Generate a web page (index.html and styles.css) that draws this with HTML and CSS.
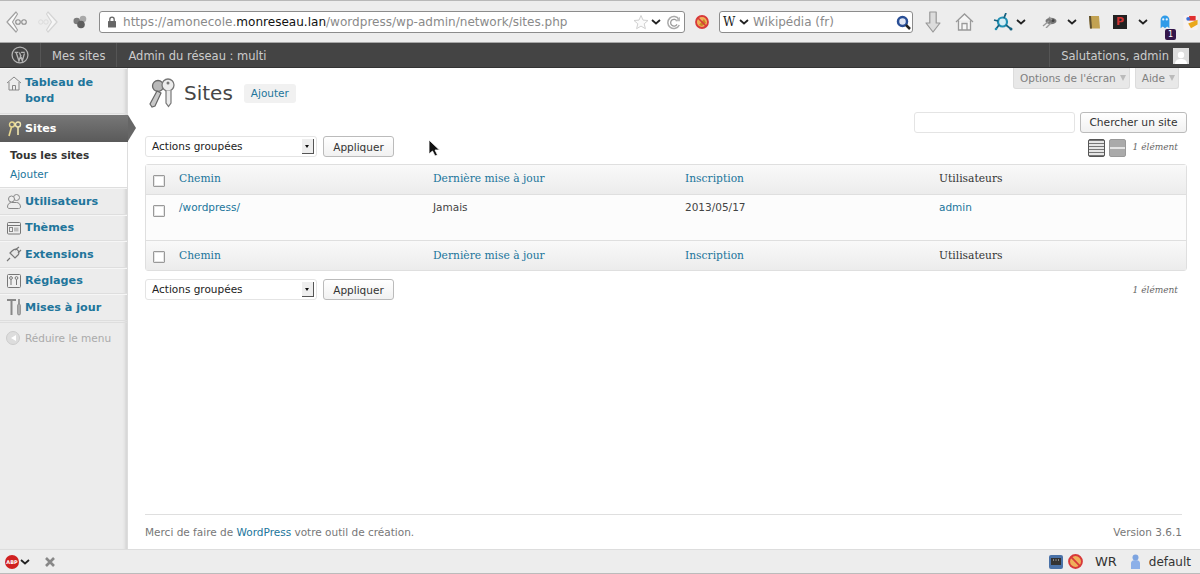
FILE: index.html
```html
<!DOCTYPE html>
<html lang="fr">
<head>
<meta charset="utf-8">
<title>Sites</title>
<link rel="stylesheet" href="styles.css">
</head>
<body>
<div class="page">
  <header class="chrome">
    <svg class="ic back" width="22" height="24" viewBox="0 0 22 24"><path d="M10 2 1 12l9 10 1.500-2-5-8 5-8z" fill="#fbfbfb" stroke="#a0a0a0" stroke-width="1.200" stroke-linejoin="round"/><circle cx="12" cy="12" r="2.300" fill="none" stroke="#8e8e8e" stroke-width="1.100"/><circle cx="18" cy="12" r="2.300" fill="none" stroke="#8e8e8e" stroke-width="1.100"/></svg>
    <svg class="ic fwd" width="20" height="24" viewBox="0 0 20 24"><path d="M10 2l9 10-9 10-1.500-2 5-8-5-8z" fill="#f6f6f6" stroke="#d4d4d4" stroke-width="1.200" stroke-linejoin="round"/><circle cx="2.800" cy="12" r="2.200" fill="none" stroke="#dcdcdc"/><circle cx="8" cy="12" r="2.200" fill="none" stroke="#dcdcdc"/></svg>
    <svg class="ic tabs" width="14" height="14" viewBox="0 0 14 14"><circle cx="3.800" cy="6" r="3.300" fill="#7c7c7c"/><circle cx="10" cy="4" r="3.300" fill="#a8a8a8"/><circle cx="8" cy="9.500" r="3.800" fill="#5e5e5e"/></svg>
    <div class="urlbar">
      <svg width="10" height="12" viewBox="0 0 10 12"><rect x="1" y="5" width="8" height="6.500" rx=".5" fill="#666"/><path d="M2.800 5V3.400a2.200 2.200 0 0 1 4.400 0V5" fill="none" stroke="#666" stroke-width="1.300"/></svg>
      <span class="url">https://amonecole.<b>monreseau.lan</b>/wordpress/wp-admin/network/sites.php</span>
      <svg class="star" width="16" height="16" viewBox="0 0 16 16"><path d="M8 1.500l2 4.600 5 .4-3.800 3.300 1.200 4.900L8 12.100l-4.400 2.600 1.200-4.900L1 6.500l5-.4z" fill="#fbfbfb" stroke="#d0d0d0"/></svg>
      <svg class="chev" width="10" height="6" viewBox="0 0 10 6"><path d="M1 1l4 3.500L9 1" fill="none" stroke="#222" stroke-width="1.800"/></svg>
      <svg class="reload" width="15" height="15" viewBox="0 0 15 15"><path d="M13 4.500A6 6 0 1 0 13.300 10" fill="none" stroke="#aaa" stroke-width="1.500"/><path d="M11 6a3.400 3.400 0 1 0 0 3.400" fill="none" stroke="#999" stroke-width="1.300"/><path d="M9.500 6.300H14V1.800z" fill="#bbb"/></svg>
    </div>
    <svg class="ic noscript" width="14" height="14" viewBox="0 0 14 14"><circle cx="7" cy="7" r="6" fill="#efb05a" stroke="#d8393a" stroke-width="1.800"/><path d="M4 10l5-6 2 4-4 3z" fill="#c98422"/><path d="M3 3l8 8" stroke="#d8393a" stroke-width="1.600"/></svg>
    <div class="searchbar">
      <span class="wlogo">W</span>
      <svg class="chev" width="10" height="6" viewBox="0 0 10 6"><path d="M1 1l4 3.500L9 1" fill="none" stroke="#222" stroke-width="1.800"/></svg>
      <span class="wiki">Wikipédia (fr)</span>
      <svg class="loupe" width="15" height="15" viewBox="0 0 15 15"><circle cx="6.500" cy="6.500" r="4.500" fill="#dfe6f5" stroke="#2a4f96" stroke-width="2.500"/><path d="M10 10l4 4" stroke="#222" stroke-width="2.500"/></svg>
    </div>
    <svg class="ic dl" width="16" height="22" viewBox="0 0 16 22"><path d="M4.800 1h6.400v11H15l-7 9-7-9h3.800z" fill="#dcdcdc" stroke="#989898" stroke-width="1.200" stroke-linejoin="round"/></svg>
    <svg class="ic home" width="19" height="20" viewBox="0 0 19 20"><path d="M1 10l8.500-8L18 10M3.500 8.500V18h12V8.500" fill="#f6f6f6" stroke="#999" stroke-width="1.300"/><path d="M7 18v-6.500h5V18" fill="none" stroke="#999" stroke-width="1.300"/></svg>
    <svg class="ic net" width="20" height="18" viewBox="0 0 20 18"><circle cx="9.500" cy="9" r="4.500" fill="#d6eef6" stroke="#1f90b4" stroke-width="2.200"/><path d="M1 7l4 1M13 0l-2 5M13 12l5 4M6 12l-3 4" stroke="#16617f" stroke-width="1.800"/><circle cx="18" cy="16" r="1.500" fill="#16617f"/><circle cx="3" cy="16" r="1.300" fill="#1f90b4"/></svg>
    <svg class="chev c1" width="10" height="6" viewBox="0 0 10 6"><path d="M1 1l4 3.500L9 1" fill="none" stroke="#222" stroke-width="1.800"/></svg>
    <svg class="ic fly" width="15" height="12" viewBox="0 0 15 12"><ellipse cx="9" cy="5" rx="5.500" ry="3.300" fill="#777"/><circle cx="11" cy="4.500" r="1.500" fill="#444"/><path d="M1 10l6-5M4 12l5-5M7 1l3 3" stroke="#999" stroke-width="1.400"/></svg>
    <svg class="chev c2" width="10" height="6" viewBox="0 0 10 6"><path d="M1 1l4 3.500L9 1" fill="none" stroke="#222" stroke-width="1.800"/></svg>
    <svg class="ic note" width="12" height="13" viewBox="0 0 12 13"><path d="M1 0h10l1 12.500H2z" fill="#c2a252"/><path d="M1 0h2l1 12.500H2z" fill="#5e5030"/></svg>
    <span class="pocket">P</span>
    <svg class="chev c3" width="10" height="6" viewBox="0 0 10 6"><path d="M1 1l4 3.500L9 1" fill="none" stroke="#222" stroke-width="1.800"/></svg>
    <span class="ghost">
      <svg width="12" height="14" viewBox="0 0 12 16"><path d="M1 15V5.500a5 5 0 0 1 10 0V15l-2.500-2L6 15l-2.500-2z" fill="#2f9be8"/><circle cx="4" cy="5" r="1.300" fill="#e8f4ff"/><circle cx="8" cy="5" r="1.300" fill="#e8f4ff"/></svg>
      <span class="badge">1</span>
    </span>
    <svg class="ic last" width="15" height="15" viewBox="0 0 15 16"><rect x="0" y="0" width="15" height="16" rx="2" fill="#f7f2f2"/><path d="M5 9l10-4v5l-7 4z" fill="#eaa81c"/><path d="M6 1h7v5H6z" fill="#e03030"/><circle cx="5" cy="4" r="2" fill="#3a6fd8"/></svg>
  </header>

  <nav class="adminbar">
    <span class="ab-item ab-wp">
      <svg width="18" height="18" viewBox="0 0 17 17"><circle cx="8.500" cy="8.500" r="7.500" fill="none" stroke="#b4b4b4" stroke-width="1.200"/><path d="M3.500 6h3.500M9.500 6H13M4.800 6l2.700 8 2-5.500M8 6l2.700 8 2-7" fill="none" stroke="#b4b4b4" stroke-width="1.300"/></svg>
    </span>
    <span class="ab-item">Mes sites</span>
    <span class="ab-item ab-net">Admin du réseau : multi</span>
    <span class="ab-item ab-user">Salutations, admin <span class="avatar"><svg width="14" height="14" viewBox="0 0 14 14"><circle cx="7" cy="5" r="3.200" fill="#fff"/><path d="M1 14c0-4 3-5 6-5s6 1 6 5z" fill="#fff"/></svg></span></span>
  </nav>

  <div class="main">
    <aside class="sidebar">
      <a class="menu-item two-lines">
        <svg width="16" height="16" viewBox="0 0 16 16"><path d="M1 8l7-6 7 6M3 7v8h10V7" fill="#eee" stroke="#888"/><path d="M6.500 15v-4.500h3V15" fill="none" stroke="#888"/></svg>
        <span>Tableau de bord</span>
      </a>
      <div class="menu-current">
        <svg width="16" height="16" viewBox="0 0 16 16"><circle cx="6" cy="3.500" r="2.500" fill="none" stroke="#e8d890" stroke-width="1.400"/><path d="M5.500 6L3 15" stroke="#e8d890" stroke-width="1.600"/><circle cx="12" cy="3.500" r="2.500" fill="none" stroke="#f0e6b0" stroke-width="1.400"/><path d="M12 6v8" stroke="#f0e6b0" stroke-width="1.600"/></svg>
        <span>Sites</span>
      </div>
      <div class="submenu">
        <a class="sub-on">Tous les sites</a>
        <a class="sub-link">Ajouter</a>
      </div>
      <a class="menu-item">
        <svg width="16" height="16" viewBox="0 0 16 16"><circle cx="10.500" cy="4.500" r="3" fill="#eee" stroke="#888"/><circle cx="5.500" cy="6" r="3" fill="#eee" stroke="#888"/><path d="M1.500 14c0-3 2-4.500 4-4.500h5c2 0 4 1.500 4 4.500 0 1-1 1.500-2 1.500H4c-1.500 0-2.500-.5-2.500-1.500z" fill="#eee" stroke="#888"/></svg>
        <span>Utilisateurs</span>
      </a>
      <a class="menu-item">
        <svg width="16" height="16" viewBox="0 0 16 16"><rect x="1.500" y="2.500" width="13" height="11.500" rx="1" fill="#eee" stroke="#777"/><path d="M1.500 5.500h13" stroke="#777"/><rect x="3.500" y="7.500" width="3" height="4" fill="none" stroke="#888"/><rect x="8" y="7.500" width="4.500" height="4" fill="#bbb"/></svg>
        <span>Thèmes</span>
      </a>
      <a class="menu-item">
        <svg width="16" height="16" viewBox="0 0 16 16"><path d="M1 15l3-3M4 7l5 5 3-3c1.500-1.500 1-4-1-5.500C9.500 2.500 7.500 3.500 6 5zM9 4l4-3M12 7l3-3" fill="#e8e8e8" stroke="#777" stroke-width="1.200"/></svg>
        <span>Extensions</span>
      </a>
      <a class="menu-item">
        <svg width="16" height="16" viewBox="0 0 16 16"><rect x="1.500" y="1.500" width="13" height="13" rx="1" fill="#f0f0f0" stroke="#777"/><circle cx="5" cy="5" r="1.400" fill="none" stroke="#777"/><path d="M5 6.500V12" stroke="#777"/><circle cx="10.500" cy="5" r="1.400" fill="none" stroke="#777"/><path d="M10.500 6.500V12" stroke="#777"/></svg>
        <span>Réglages</span>
      </a>
      <a class="menu-item">
        <svg width="16" height="18" viewBox="0 0 16 18"><path d="M1 2h9M5.500 2v15" fill="none" stroke="#888" stroke-width="2"/><path d="M13 1v5" stroke="#777" stroke-width="1.400"/><rect x="11.500" y="6" width="3" height="11" rx="1.500" fill="#aaa" stroke="#777" stroke-width=".6"/></svg>
        <span>Mises à jour</span>
      </a>
      <div class="collapse">
        <span class="collapse-btn"><i></i></span>
        <span>Réduire le menu</span>
      </div>
    </aside>

    <main class="content">
      <div class="screen-tabs">
        <span class="tab">Options de l'écran <i></i></span>
        <span class="tab">Aide <i></i></span>
      </div>
      <div class="title-row">
        <svg width="30" height="30" viewBox="0 0 30 30"><circle cx="11" cy="8" r="5.500" fill="#b8b8b8" stroke="#666" stroke-width="1.300"/><path d="M10 13L3 26l2 3 3-1 6-13z" fill="#c8c8c8" stroke="#666" stroke-width="1.200"/><circle cx="21" cy="7" r="6" fill="#ececec" stroke="#777" stroke-width="1.300"/><circle cx="21" cy="5" r="1.500" fill="#777"/><path d="M19 12.500V25l2.500 3.500L24 25V12.500" fill="#ececec" stroke="#777" stroke-width="1.200"/></svg>
        <h1>Sites</h1>
        <a class="add-new">Ajouter</a>
      </div>
      <div class="search-row">
        <span class="input"></span>
        <span class="btn search-btn">Chercher un site</span>
      </div>
      <div class="nav top-nav">
        <div class="select"><span>Actions groupées</span><i class="arrow"></i></div>
        <span class="btn">Appliquer</span>
        <span class="view view-list"></span>
        <span class="view view-excerpt"></span>
        <em class="count">1 élément</em>
      </div>
      <table class="sites">
        <thead>
          <tr>
            <th class="cb"><span class="check"></span></th>
            <th class="c1"><a>Chemin</a></th>
            <th class="c2"><a>Dernière mise à jour</a></th>
            <th class="c3"><a>Inscription</a></th>
            <th>Utilisateurs</th>
          </tr>
        </thead>
        <tbody>
          <tr>
            <td class="cb"><span class="check"></span></td>
            <td><a>/wordpress/</a></td>
            <td>Jamais</td>
            <td>2013/05/17</td>
            <td><a>admin</a></td>
          </tr>
        </tbody>
        <tfoot>
          <tr>
            <th class="cb"><span class="check"></span></th>
            <th><a>Chemin</a></th>
            <th><a>Dernière mise à jour</a></th>
            <th><a>Inscription</a></th>
            <th>Utilisateurs</th>
          </tr>
        </tfoot>
      </table>
      <div class="nav bottom-nav">
        <div class="select"><span>Actions groupées</span><i class="arrow"></i></div>
        <span class="btn">Appliquer</span>
        <em class="count">1 élément</em>
      </div>
      <footer class="foot">
        <span>Merci de faire de <a>WordPress</a> votre outil de création.</span>
        <span>Version 3.6.1</span>
      </footer>
      <svg class="cursor" width="12" height="18" viewBox="0 0 12 18"><path d="M1 1v14l3.500-3 2.500 5 2.500-1-2.500-5h4.500z" fill="#111" stroke="#fff" stroke-width=".8"/></svg>
    </main>
  </div>

  <footer class="statusbar">
    <span class="abp">ABP</span>
    <svg class="chev" width="10" height="6" viewBox="0 0 10 6"><path d="M1 1l4 3.500L9 1" fill="none" stroke="#222" stroke-width="1.800"/></svg>
    <svg class="close" width="10" height="10" viewBox="0 0 10 10"><path d="M1 1l8 8M9 1l-8 8" stroke="#888" stroke-width="2.600"/></svg>
    <svg class="irc" width="14" height="14" viewBox="0 0 14 14"><rect width="14" height="14" rx="2" fill="#4a72a8"/><rect x="2" y="3" width="10" height="7" fill="#333"/><path d="M4 5h1M6.500 5h1M9 5h1" stroke="#ddd"/></svg>
    <svg class="ns" width="15" height="15" viewBox="0 0 14 14"><circle cx="7" cy="7" r="6" fill="#efb05a" stroke="#d8393a" stroke-width="1.800"/><path d="M3 3l8 8" stroke="#d8393a" stroke-width="1.600"/></svg>
    <span class="wr">WR</span>
    <svg class="person" width="11" height="16" viewBox="0 0 11 16"><circle cx="5.500" cy="3.500" r="3" fill="#7da4e0"/><path d="M1 15V9c0-2 2-3 4.500-3S10 7 10 9v6z" fill="#8db0e8"/></svg>
    <span class="profile">default</span>
  </footer>
</div>
</body>
</html>
```
FILE: styles.css
```css
* { box-sizing: border-box; }
html, body { margin: 0; height: 100%; overflow: hidden; }
body { font-family: "DejaVu Sans", sans-serif; font-size: 10.500px; color: #333; background: #fff; }
a { color: #21759b; text-decoration: none; }
svg { display: block; flex: none; }

.page { display: flex; flex-direction: column; height: 574px; }

.chrome { height: 43px; flex: none; display: flex; align-items: center; background: #ededed; border-top: 1px solid #b8b8b8; border-bottom: 1px solid #a8a8a8; padding: 1px 0 0 6px; }
.back { margin-right: 10px; }
.fwd { margin-right: 15px; }
.tabs { margin-right: 12px; }
.urlbar { width: 586px; height: 22px; background: #fff; border: 1px solid #8c8c8c; border-radius: 3px; display: flex; align-items: center; padding: 0 3px 0 7px; margin-right: 10px; }
.url { font-size: 12.050px; color: #8a8a8a; margin-left: 6px; flex: 1; white-space: nowrap; }
.url b { font-weight: 400; color: #111; }
.star { margin-right: 2px; }
.urlbar .chev { margin-right: 5px; }
.noscript { margin-right: 10px; }
.searchbar { width: 194px; height: 22px; background: #fff; border: 1px solid #8c8c8c; border-radius: 3px; display: flex; align-items: center; padding: 0 1px 0 3px; margin-right: 12px; }
.wlogo { font-family: "DejaVu Serif", serif; font-size: 12px; color: #222; width: 14px; margin-right: 2px; }
.wiki { font-size: 12px; color: #8a8a8a; margin-left: 4px; flex: 1; white-space: nowrap; }
.dl { margin-right: 14px; }
.home { margin-right: 19px; }
.net { margin-right: 3px; }
.c1 { margin-right: 16px; }
.fly { margin-right: 10px; }
.c2 { margin-right: 11px; }
.note { margin-right: 13px; }
.pocket { width: 14px; height: 14px; background: #222; color: #c33; font-size: 11px; font-weight: 700; text-align: center; line-height: 14px; margin-right: 11px; }
.c3 { margin-right: 11px; }
.ghost { position: relative; display: block; margin-right: 12px; }
.badge { position: absolute; left: 6px; top: 14px; width: 11px; height: 11px; background: #33164a; color: #fff; font-size: 8px; line-height: 11px; text-align: center; border-radius: 2px; }

.adminbar { height: 25px; flex: none; display: flex; align-items: center; background: #444; color: #ccc; font-size: 11.500px; border-bottom: 1px solid #333; }
.ab-item { height: 24px; display: flex; align-items: center; padding: 1px 11px 0; border-right: 1px solid #555; white-space: nowrap; }
.ab-wp { width: 41px; justify-content: center; padding: 0; border-right: 1px solid #555; }
.ab-net { border-right: 0; }
.ab-user { margin-left: auto; border-right: 0; border-left: 1px solid #555; gap: 4px; }
.avatar { width: 16px; height: 16px; background: #ddd; display: flex; align-items: flex-end; justify-content: center; }

.main { flex: 1; display: flex; min-height: 0; }

.sidebar { width: 128px; flex: none; background: #ececec; box-shadow: inset -4px 0 3px -2px #d4d4d4; border-right: 1px solid #ddd; }
.menu-item { display: flex; align-items: center; gap: 3px; height: 26.500px; padding-left: 6px; font-weight: 700; font-size: 11.200px; color: #21759b; border-top: 1px solid #f6f6f6; border-bottom: 1px solid #dedede; white-space: nowrap; }
.two-lines { height: 46px; align-items: flex-start; padding-top: 6px; line-height: 16px; white-space: normal; }
.two-lines span { width: 80px; }
.menu-current { position: relative; height: 27px; margin-top: 1px; width: 128px; display: flex; align-items: center; gap: 3px; padding-left: 6px; background: linear-gradient(#777, #5a5a5a); color: #fff; font-weight: 700; font-size: 11.200px; }
.menu-current::after { content: ""; position: absolute; left: 128px; top: 0; border-left: 8px solid #666; border-top: 13.500px solid transparent; border-bottom: 13.500px solid transparent; }
.submenu { background: #fff; padding: 5px 0 5px 10px; display: flex; flex-direction: column; gap: 3px; line-height: 16px; border-bottom: 1px solid #dedede; }
.sub-on { font-weight: 700; color: #333; }
.sub-link { color: #21759b; }
.collapse { display: flex; align-items: center; gap: 5px; padding: 8px 0 0 6px; color: #aaa; border-top: 1px solid #dedede; margin-top: 1px; }
.collapse-btn { width: 14px; height: 14px; border-radius: 50%; background: #ddd; border: 1px solid #ccc; display: flex; align-items: center; justify-content: center; }
.collapse-btn i { border-right: 5px solid #fff; border-top: 3.500px solid transparent; border-bottom: 3.500px solid transparent; }

.content { position: relative; flex: 1; padding: 0 13px 0 17px; display: flex; flex-direction: column; min-width: 0; }
.screen-tabs { position: absolute; top: 0; right: 21px; display: flex; gap: 5px; }
.tab { height: 21px; padding: 0 3px 0 6px; background: #e8e8e8; border: 1px solid #dcdcdc; border-top: 0; border-radius: 0 0 3px 3px; color: #808080; font-size: 10.500px; display: flex; align-items: center; gap: 4px; }
.tab i { border-top: 6px solid #bbb; border-left: 3.500px solid transparent; border-right: 3.500px solid transparent; }

.title-row { display: flex; align-items: center; height: 39px; margin-top: 5px; flex: none; padding-left: 2px; }
.title-row h1 { margin: 0 11px 0 7px; font-weight: 400; font-size: 20px; color: #464646; }
.add-new { background: #f1f1f1; padding: 2px 7px; margin-top: 2px; border-radius: 3px; font-size: 10.500px; line-height: 15px; }

.search-row { display: flex; justify-content: flex-end; gap: 5px; height: 21px; margin-bottom: 3px; flex: none; }
.input { width: 161px; height: 21px; background: #fff; border: 1px solid #e4e4e4; border-radius: 3px; }
.btn { height: 21px; width: 71px; justify-content: center; display: inline-flex; align-items: center; background: linear-gradient(#fff, #f1f1f1); border: 1px solid #bbb; border-radius: 3px; color: #333; font-size: 10.500px; white-space: nowrap; }
.search-btn { width: 107px; font-size: 10.700px; }

.nav { display: flex; align-items: center; height: 21px; flex: none; }
.top-nav { margin-bottom: 7px; }
.select { width: 172px; height: 21px; background: #fff; border: 1px solid #e4e4e4; border-radius: 3px; display: flex; align-items: center; justify-content: space-between; padding: 0 2px 1px 6px; color: #222; margin-right: 6px; }
.arrow { width: 12px; height: 15px; background: #eee; border-right: 1px solid #555; border-bottom: 1px solid #555; position: relative; }
.arrow::after { content: ""; position: absolute; left: 3px; top: 6px; border-top: 3px solid #111; border-left: 2.500px solid transparent; border-right: 2.500px solid transparent; }
.view { width: 17px; height: 18px; border-radius: 2px; margin-right: 4px; margin-top: 2px; }
.view-list { margin-left: auto; background: repeating-linear-gradient(#777 0 1px, #e6e6e6 1px 3px); border: 1px solid #555; }
.view-excerpt { margin-right: 0; background: linear-gradient(#aaa 0 7px, #e4e4e4 7px 9px, #aaa 9px); border: 1px solid #999; }
.count { margin-left: 7px; font-family: "DejaVu Serif", serif; font-size: 9px; color: #666; padding-right: 9px; }
.bottom-nav .count { margin-left: auto; }

.sites { width: 100%; border-collapse: separate; border-spacing: 0; border: 1px solid #dfdfdf; border-radius: 3px; background: #fcfcfc; table-layout: fixed; flex: none; }
.sites th { height: 30px; background: linear-gradient(#f9f9f9, #ececec); font-family: "DejaVu Serif", serif; font-weight: 400; font-size: 10.700px; text-align: left; color: #333; padding: 0 7px; }
.sites thead th { border-bottom: 1px solid #dfdfdf; padding-bottom: 2px; }
.sites tfoot th { border-top: 1px solid #dfdfdf; }
.sites td { height: 45px; vertical-align: top; padding: 6px 7px; font-size: 10.500px; color: #444; }
.sites .cb { width: 26px; padding: 0 0 0 7px; }
.sites thead .cb { padding: 2px 0 0 7px; }
.sites tfoot .cb { padding: 3px 0 0 7px; }
.sites .c1 { width: 254px; }
.sites .c2 { width: 252px; }
.sites .c3 { width: 254px; }
.sites td.cb { padding-top: 10px; }
.check { display: block; width: 12px; height: 12px; background: #fff; border: 1px solid #999; border-radius: 1px; box-shadow: inset 0 0 0 1px #e4e4e4; }
.bottom-nav { margin-top: 8px; }

.foot { margin-top: auto; margin-right: 5px; height: 35px; border-top: 1px solid #dfdfdf; display: flex; justify-content: space-between; align-items: center; color: #777; font-size: 10.500px; }
.cursor { position: absolute; left: 300px; top: 71px; }

.statusbar { height: 25px; flex: none; background: #ededed; border-top: 1px solid #ddd; border-bottom: 1px solid #bbb; display: flex; align-items: center; padding: 0 9px 0 5px; font-size: 12px; color: #333; }
.abp { width: 14px; height: 14px; border-radius: 50%; background: #d02020; color: #fff; font-size: 5px; font-weight: 700; display: flex; align-items: center; justify-content: center; margin-right: 1px; }
.close { margin-left: 15px; }
.irc { margin-left: auto; margin-right: 5px; }
.ns { margin-right: 12px; }
.wr { margin-right: 13px; font-size: 13px; }
.person { margin-right: 8px; }
```
